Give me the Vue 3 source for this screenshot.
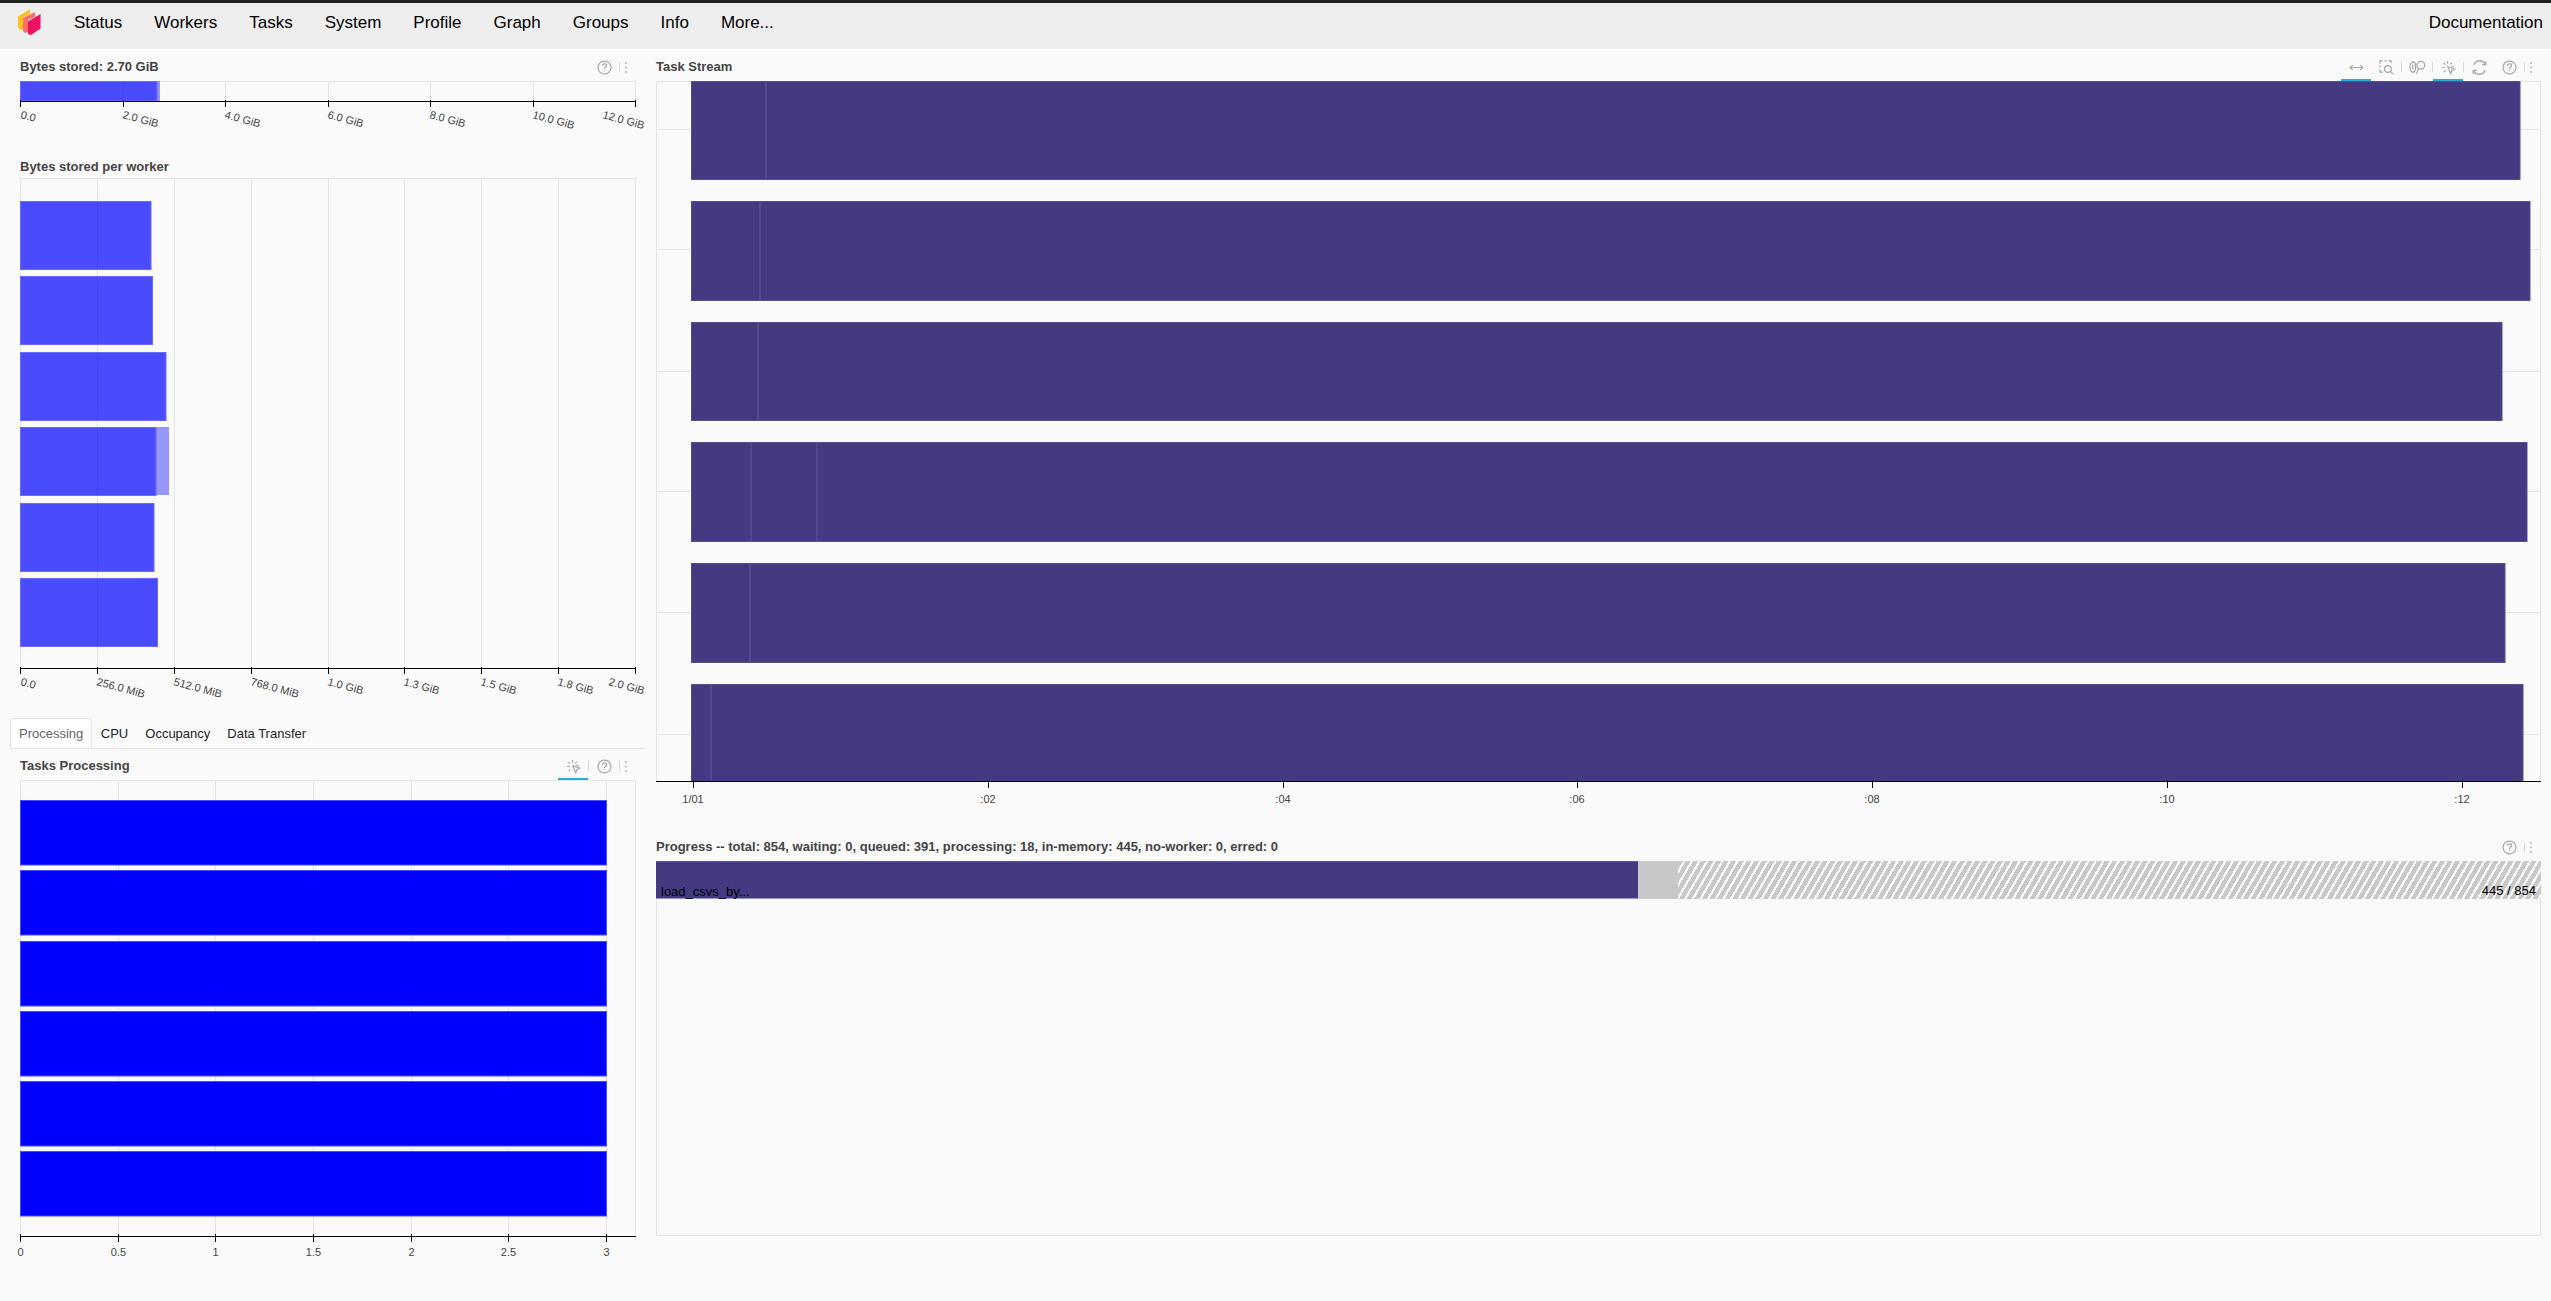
<template>
  <div class="page">
    <svg class="icon-defs" aria-hidden="true">
      <symbol id="i-pan" viewBox="0 0 16 16">
        <path d="M1 8h14M4 5.500 1.200 8 4 10.500M12 5.500 14.800 8 12 10.500" />
      </symbol>
      <symbol id="i-box" viewBox="0 0 16 16">
        <path d="M1 4V1h3M6 1h2M10 1h3v2M1 6v2M1 10v3h3" />
        <circle cx="9.500" cy="9.500" r="3.600" />
        <path d="m12 12 3 3" />
      </symbol>
      <symbol id="i-wheel" viewBox="0 0 18 16">
        <ellipse cx="4" cy="7.500" rx="3" ry="5.600" />
        <path d="M4 5v5" />
        <circle cx="12.500" cy="5.600" r="4.200" />
        <path d="M10.200 9.200 7.800 14.600" />
      </symbol>
      <symbol id="i-tap" viewBox="0 0 16 16">
        <path d="M7 1v3M2.600 3l2 2M1 8h3M2.800 13l2-2M11.600 2.800l-1.600 2M13.800 7H11" />
        <path d="M7.200 7.200 14.800 9.800 11.600 11.200 10.400 14.600Z" />
      </symbol>
      <symbol id="i-reset" viewBox="0 0 16 16">
        <path d="M14 4.200A6.600 6.600 0 0 0 2 5M2 11.800A6.600 6.600 0 0 0 14 11" stroke-width="1.600" />
        <path d="M10.800 5h4V1.200M5.200 11h-4v3.800" stroke-width="1.400" />
      </symbol>
      <symbol id="i-help" viewBox="0 0 16 16">
        <circle cx="8" cy="8" r="6.900" />
        <path d="M5.900 6.200C5.900 4.900 6.800 4.200 8 4.200c1.300 0 2.200.8 2.200 1.900 0 1.600-2.200 1.700-2.200 3.500M8 10.800v1.200" />
      </symbol>
      <symbol id="i-dots" viewBox="0 0 4 16">
        <path d="M2 2.500v1.400M2 7.300v1.400M2 12.100v1.400" stroke-width="1.600" />
      </symbol>
    </svg>

    <nav class="nav">
      <svg class="logo" viewBox="18 9 23 26" width="23" height="26">
        <polygon points="18,16.500 30,9 30,14 23,17.500 23,29.500 21,30 18,28" fill="#ffc11e" />
        <polygon points="23,18 35,12 35,17 28,20 28,32 25,33 23,31" fill="#fc6e6b" />
        <polygon points="28,21.500 40.500,14 40.500,28.500 31,35 28,34" fill="#ef1161" />
      </svg>
      <a v-for="item in navItems" :key="item" class="nav-item">{{ item }}</a>
      <a class="nav-item nav-doc">Documentation</a>
    </nav>

    <main class="dash">
      <section class="col-left">
        <div class="panel-head first">
          <span class="title">Bytes stored: 2.70 GiB</span>
          <div class="tools">
            <span class="tool"><svg class="ico"><use href="#i-help" /></svg></span>
            <i class="sep"></i>
            <span class="dots"><svg class="ico-dots"><use href="#i-dots" /></svg></span>
          </div>
        </div>
        <svg class="chart" viewBox="0 81 656 76" width="656" height="76">
          <rect x="20.500" y="81.500" width="615" height="20" class="frame" />
          <line v-for="t in totalTicks" :key="t.x" :x1="t.x + .5" :x2="t.x + .5" y1="81" y2="101" class="grid" />
          <rect x="157" y="81" width="3" height="20" fill="rgba(0,0,255,.4)" />
          <rect x="20.500" y="81.500" width="136.500" height="19.500" class="mem-bar" />
          <line x1="20" x2="636" y1="101.500" y2="101.500" class="axis" />
          <g v-for="t in totalTicks" :key="t.label">
            <line :x1="t.x + .5" :x2="t.x + .5" y1="100" y2="107" class="axis" />
            <text :transform="`translate(${t.x + t.dx},118) rotate(15)`" class="tick">{{ t.label }}</text>
          </g>
        </svg>

        <div class="panel-head second">
          <span class="title">Bytes stored per worker</span>
        </div>
        <svg class="chart" viewBox="0 178 656 540" width="656" height="540">
          <rect x="20.500" y="178.500" width="615" height="490" class="frame" />
          <line v-for="t in workerTicks" :key="t.x" :x1="t.x + .5" :x2="t.x + .5" y1="178" y2="668" class="grid" />
          <g v-for="b in workerBars" :key="b.y">
            <rect v-if="b.spill" :x="b.end" :y="b.y" :width="b.spill - b.end" height="68" fill="rgba(0,0,255,.4)" />
            <rect x="20.500" :y="b.y + .5" :width="b.end - 20.500" height="68" class="mem-bar" />
          </g>
          <line x1="20" x2="636" y1="668.500" y2="668.500" class="axis" />
          <g v-for="t in workerTicks" :key="t.label">
            <line :x1="t.x + .5" :x2="t.x + .5" y1="667" y2="674" class="axis" />
            <text :transform="`translate(${t.x + t.dx},685) rotate(15)`" class="tick">{{ t.label }}</text>
          </g>
        </svg>

        <div class="tabs">
          <span v-for="(tab, i) in tabs" :key="tab" class="tab" :class="{ active: i === 0 }">{{ tab }}</span>
        </div>

        <div class="panel-head third">
          <span class="title">Tasks Processing</span>
          <div class="tools">
            <span class="tool active"><svg class="ico"><use href="#i-tap" /></svg></span>
            <i class="sep"></i>
            <span class="tool"><svg class="ico"><use href="#i-help" /></svg></span>
            <i class="sep"></i>
            <span class="dots"><svg class="ico-dots"><use href="#i-dots" /></svg></span>
          </div>
        </div>
        <svg class="chart" viewBox="0 779 656 500" width="656" height="500">
          <rect x="20.500" y="779.500" width="615" height="456" class="frame" />
          <line v-for="t in procTicks" :key="t.x" :x1="t.x + .5" :x2="t.x + .5" y1="779" y2="1235" class="grid" />
          <rect v-for="y in procBars" :key="y" x="20.500" :y="y + .5" width="586" height="64.500" class="proc-bar" />
          <line x1="20" x2="636" y1="1235.500" y2="1235.500" class="axis" />
          <g v-for="t in procTicks" :key="t.label">
            <line :x1="t.x + .5" :x2="t.x + .5" y1="1233" y2="1241" class="axis" />
            <text :x="t.x + .5" y="1255" text-anchor="middle" class="tick">{{ t.label }}</text>
          </g>
        </svg>
      </section>

      <section class="col-right">
        <div class="panel-head first">
          <span class="title">Task Stream</span>
          <div class="tools">
            <span class="tool active"><svg class="ico"><use href="#i-pan" /></svg></span>
            <span class="tool"><svg class="ico"><use href="#i-box" /></svg></span>
            <i class="sep"></i>
            <span class="tool"><svg class="ico ico-wide"><use href="#i-wheel" /></svg></span>
            <i class="sep"></i>
            <span class="tool active"><svg class="ico"><use href="#i-tap" /></svg></span>
            <i class="sep"></i>
            <span class="tool"><svg class="ico"><use href="#i-reset" /></svg></span>
            <span class="tool"><svg class="ico"><use href="#i-help" /></svg></span>
            <i class="sep"></i>
            <span class="dots"><svg class="ico-dots"><use href="#i-dots" /></svg></span>
          </div>
        </div>
        <svg class="chart" viewBox="656 81 1895 756" width="1895" height="756">
          <rect x="656.500" y="81.500" width="1884" height="700" class="frame" />
          <line v-for="y in streamGrid" :key="y" x1="656" x2="2541" :y1="y + .5" :y2="y + .5" class="grid" />
          <g v-for="r in streamRows" :key="r.y">
            <rect x="691.500" :y="r.y + .5" :width="r.end - 691.500" :height="r.h" class="task-bar" />
            <rect v-for="m in r.marks" :key="m" :x="m" :y="r.y + 1" width="2" :height="r.h - 1" fill="#524a8c" />
          </g>
          <line x1="656" x2="2541" y1="781.500" y2="781.500" class="axis" />
          <g v-for="t in streamTicks" :key="t.label">
            <line :x1="t.x + .5" :x2="t.x + .5" y1="780" y2="788" class="axis" />
            <text :x="t.x" y="803" text-anchor="middle" class="tick">{{ t.label }}</text>
          </g>
        </svg>

        <div class="panel-head progress-head">
          <span class="title">Progress -- total: 854, waiting: 0, queued: 391, processing: 18, in-memory: 445, no-worker: 0, erred: 0</span>
          <div class="tools">
            <span class="tool"><svg class="ico"><use href="#i-help" /></svg></span>
            <i class="sep"></i>
            <span class="dots"><svg class="ico-dots"><use href="#i-dots" /></svg></span>
          </div>
        </div>
        <div class="progress-frame">
          <div class="progress-bar">
            <div class="seg done" :style="{ width: pct(progress.memory) }"></div>
            <div class="seg running" :style="{ width: pct(progress.processing) }"></div>
            <div class="seg queued"></div>
            <span class="bar-name">load_csvs_by...</span>
            <span class="bar-count">{{ progress.memory }} / {{ progress.total }}</span>
          </div>
        </div>
      </section>
    </main>
  </div>
</template>

<script setup>
const navItems = ['Status', 'Workers', 'Tasks', 'System', 'Profile', 'Graph', 'Groups', 'Info', 'More...']
const tabs = ['Processing', 'CPU', 'Occupancy', 'Data Transfer']

const totalTicks = [
  { x: 20, dx: 0, label: '0.0' },
  { x: 123, dx: -1, label: '2.0 GiB' },
  { x: 225, dx: -1, label: '4.0 GiB' },
  { x: 328, dx: -1, label: '6.0 GiB' },
  { x: 430, dx: -1, label: '8.0 GiB' },
  { x: 533, dx: -1, label: '10.0 GiB' },
  { x: 635, dx: -33, label: '12.0 GiB' }
]

const workerTicks = [
  { x: 20, dx: 0, label: '0.0' },
  { x: 97, dx: -1, label: '256.0 MiB' },
  { x: 174, dx: -1, label: '512.0 MiB' },
  { x: 251, dx: -1, label: '768.0 MiB' },
  { x: 328, dx: -1, label: '1.0 GiB' },
  { x: 404, dx: -1, label: '1.3 GiB' },
  { x: 481, dx: -1, label: '1.5 GiB' },
  { x: 558, dx: -1, label: '1.8 GiB' },
  { x: 635, dx: -27, label: '2.0 GiB' }
]

const workerBars = [
  { y: 201, end: 151 },
  { y: 276, end: 152.5 },
  { y: 352, end: 166 },
  { y: 427, end: 156, spill: 169 },
  { y: 503, end: 154 },
  { y: 578, end: 157.5 }
]

const procTicks = ['0', '0.5', '1', '1.5', '2', '2.5', '3'].map((label, i) => ({
  label,
  x: Math.round(20 + i * 97.67)
}))
const procBars = [799, 869, 940, 1010, 1080, 1150]

const streamGrid = [129, 249, 371, 491, 612, 734]
const streamRows = [
  { y: 81, h: 98, end: 2520, marks: [765] },
  { y: 201, h: 99, end: 2530, marks: [759] },
  { y: 322, h: 98, end: 2502, marks: [757] },
  { y: 442, h: 99, end: 2527, marks: [750, 816] },
  { y: 563, h: 99, end: 2505, marks: [749] },
  { y: 684, h: 97, end: 2523, marks: [710] }
]
const streamTicks = ['1/01', ':02', ':04', ':06', ':08', ':10', ':12'].map((label, i) => ({
  label,
  x: Math.round(693 + i * 294.75)
}))

const progress = { total: 854, memory: 445, processing: 18 }
const pct = (n) => `${(n / progress.total) * 100}%`
</script>

<style scoped>
.page {
  width: 2551px;
  height: 1301px;
  overflow: hidden;
  font-family: "Liberation Sans", Arial, sans-serif;
  color: #000;
  background: #fafafa;
}
.icon-defs {
  position: absolute;
  width: 0;
  height: 0;
}
.nav {
  display: flex;
  align-items: flex-start;
  height: 46px;
  border-top: 3px solid #222;
  background: #eeeeee;
  font-size: 17px;
  line-height: 40px;
}
.logo {
  flex: none;
  width: 23px;
  height: 26px;
  margin: 6px 17px 0 18px;
}
.nav-item {
  padding: 0 16px;
}
.nav-doc {
  margin-left: auto;
  padding: 0 8px 0 0;
}
.dash {
  display: grid;
  grid-template-columns: 656px 1895px;
}
.panel-head {
  display: flex;
  align-items: center;
  height: 20px;
  margin-bottom: 4px;
}
.col-left .panel-head {
  padding: 0 25px 0 20px;
}
.col-right .panel-head {
  padding-right: 15px;
}
.first {
  margin-top: 8px;
}
.second {
  margin-bottom: 1px;
}
.third {
  margin-top: 7px;
}
.title {
  padding-bottom: 2px;
  font-size: 13px;
  font-weight: 700;
  color: #444;
}
.tools {
  display: flex;
  align-items: center;
  margin-left: auto;
}
.tool {
  position: relative;
  display: flex;
  justify-content: center;
  align-items: center;
  width: 30px;
  height: 20px;
}
.tool.active::after {
  content: "";
  position: absolute;
  left: 0;
  right: 0;
  bottom: -4px;
  height: 2px;
  background: #26aae1;
}
.ico {
  width: 15px;
  height: 15px;
  fill: none;
  stroke: #a8a8a8;
  stroke-width: 1.3;
}
.ico-wide {
  width: 17px;
}
.sep {
  width: 1px;
  height: 10px;
  background: #d8d8d8;
}
.dots {
  display: flex;
  justify-content: center;
  width: 11px;
}
.ico-dots {
  width: 4px;
  height: 15px;
  fill: none;
  stroke: #a0a0a0;
}
.chart {
  display: block;
}
.frame {
  fill: none;
  stroke: #e5e5e5;
}
.grid {
  stroke: #e5e5e5;
  stroke-width: 1;
}
.axis {
  stroke: #000;
  stroke-width: 1;
}
.tick {
  font-family: "Liberation Sans", Arial, sans-serif;
  font-size: 11px;
  fill: #444;
}
.mem-bar {
  fill: rgba(0, 0, 255, 0.7);
  stroke: #6a6aff;
  stroke-width: 1;
}
.proc-bar {
  fill: #00f;
  stroke: #4a4aff;
  stroke-width: 1;
}
.task-bar {
  fill: #433a82;
  stroke: #564e90;
  stroke-width: 1;
}
.tabs {
  display: flex;
  height: 30px;
  width: 635px;
  margin-left: 10px;
  border-bottom: 1px solid #e5e5e5;
  font-size: 13px;
  line-height: 32px;
  color: #222;
}
.tab {
  padding: 0 8.500px;
}
.tab.active {
  padding: 0 8px;
  border: 1px solid #e5e5e5;
  border-bottom: 0;
  border-radius: 4px 4px 0 0;
  background: #fff;
  color: #666;
  line-height: 30px;
}
.progress-head {
  margin-top: 0;
}
.progress-frame {
  box-sizing: border-box;
  width: 1885px;
  height: 375px;
  border: 1px solid #e5e5e5;
  border-top: 0;
}
.progress-bar {
  position: relative;
  display: flex;
  height: 38px;
  margin: 0 -1px;
  font-size: 13px;
}
.seg {
  flex: none;
}
.done {
  background: #433a82;
  border-top: 1px solid #5f5799;
  border-bottom: 1px solid #9a94c4;
  box-sizing: border-box;
}
.running {
  background: #c8c8c8;
}
.queued {
  flex: 1;
  background: repeating-linear-gradient(120deg, #c8c8c8 0 4.300px, #fafafa 4.300px 6.600px);
}
.bar-name {
  position: absolute;
  left: 5px;
  top: 23px;
  line-height: 16px;
}
.bar-count {
  position: absolute;
  right: 5px;
  top: 22px;
  line-height: 16px;
}
</style>

<style>
html,
body {
  margin: 0;
  background: #fafafa;
}
</style>
